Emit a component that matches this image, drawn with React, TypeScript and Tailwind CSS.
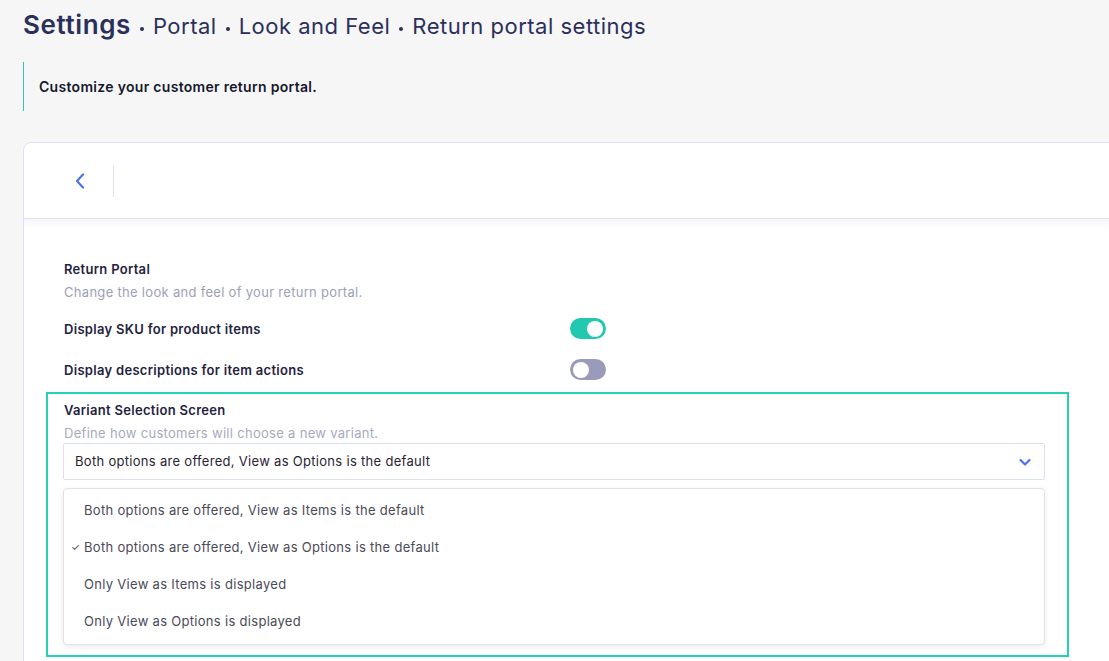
import React from 'react';

const Toggle: React.FC<{ on: boolean }> = ({ on }) => (
  <div
    className={`w-[36px] h-[21px] rounded-full flex items-center px-[3px] ${
      on ? 'bg-[#22c9b0] justify-end' : 'bg-[#9a9bbb] justify-start'
    }`}
  >
    <div className="w-[16px] h-[16px] rounded-full bg-white" />
  </div>
);

const Dot: React.FC = () => (
  <span className="inline-block w-[4px] h-[4px] rounded-full bg-[#2b2f5c] -translate-y-[3px]" />
);

const App: React.FC = () => {
  const options = [
    { label: 'Both options are offered, View as Items is the default', selected: false },
    { label: 'Both options are offered, View as Options is the default', selected: true },
    { label: 'Only View as Items is displayed', selected: false },
    { label: 'Only View as Options is displayed', selected: false }
  ];

  return (
    <div
      className="w-[1109px] h-[661px] overflow-hidden bg-[#f6f6f6] tracking-[0.3px]"
      style={{ fontFamily: 'Inter, "Open Sans", sans-serif' }}
    >
      <div className="pl-[23px] pt-[8px] flex items-baseline gap-[9px] text-[#2b2f5c]">
        <span className="text-[26px] leading-[34px] font-semibold tracking-[0.6px]">Settings</span>
        <Dot />
        <span className="text-[22px] leading-[34px] tracking-[0.5px]">Portal</span>
        <Dot />
        <span className="text-[22px] leading-[34px] tracking-[0.5px]">Look and Feel</span>
        <Dot />
        <span className="text-[22px] leading-[34px] tracking-[0.5px]">Return portal settings</span>
      </div>

      <div className="ml-[23px] mt-[19px] h-[49px] border-l border-[#3bbfbf] flex items-center pl-[15px]">
        <span className="text-[14px] font-semibold text-[#16182c]">
          Customize your customer return portal.
        </span>
      </div>

      <div className="ml-[23px] mt-[31px] w-[1120px] bg-white border border-[#dfe1f3] rounded-tl-[8px] h-[540px]">
        <div className="h-[76px] border-b border-[#dfe1f3] flex items-center pl-[46px]">
          <svg width="20" height="20" viewBox="0 0 20 20" fill="none">
            <path d="M13 3.5 L7 10 L13 16.5" stroke="#4f6ff4" strokeWidth="2.2" strokeLinecap="round" strokeLinejoin="round" />
          </svg>
          <div className="ml-[23px] w-px h-[32px] bg-[#dfe1f3]" />
        </div>
        <div className="h-[10px] bg-gradient-to-b from-[#f6f6fb] to-white" />

        <div className="pl-[40px] pt-[31px] w-[1046px]">
          <div className="text-[13px] leading-[18px] font-semibold text-[#1f2340]">Return Portal</div>
          <div className="mt-[5px] text-[13px] leading-[18px] text-[#9d9fb8]">
            Change the look and feel of your return portal.
          </div>

          <div className="mt-[17px] w-[542px] flex items-center justify-between">
            <span className="text-[13px] leading-[18px] font-semibold text-[#1f2340]">Display SKU for product items</span>
            <Toggle on />
          </div>
          <div className="mt-[20px] w-[542px] flex items-center justify-between">
            <span className="text-[13px] leading-[18px] font-semibold text-[#1f2340]">Display descriptions for item actions</span>
            <Toggle on={false} />
          </div>

          <div className="mt-[12px] -ml-[18px] w-[1023px] h-[265px] border-2 border-[#27cfb6] pl-[15px] pr-[22px] pt-[7px]">
            <div className="pl-[1px] text-[13px] leading-[18px] font-semibold text-[#1f2340]">Variant Selection Screen</div>
            <div className="pl-[1px] mt-[5px] text-[13px] leading-[18px] text-[#a7a9c0]">
              Define how customers will choose a new variant.
            </div>
            <div className="mt-[1px] h-[37px] border border-[#dde0f2] rounded-[2px] flex items-center justify-between pl-[11px] pr-[12px]">
              <span className="text-[13px] text-[#2a2333]">Both options are offered, View as Options is the default</span>
              <svg width="14" height="14" viewBox="0 0 14 14" fill="none">
                <path d="M2.5 5 L7 9.5 L11.5 5" stroke="#4f6ff4" strokeWidth="2.2" strokeLinecap="round" strokeLinejoin="round" />
              </svg>
            </div>
            <div className="mt-[8px] h-[157px] border border-[#e2e2e6] rounded-[4px] bg-white shadow-[0_2px_6px_rgba(0,0,0,0.08)] pt-[3px]">
              {options.map((o, i) => (
                <div key={i} className="h-[37px] flex items-center pl-[7px]">
                  <span className="w-[13px] text-[10px] text-[#3b3b4a]">{o.selected ? '✓' : ''}</span>
                  <span className="text-[13px] text-[#4a4a57]">{o.label}</span>
                </div>
              ))}
            </div>
          </div>
        </div>
      </div>
    </div>
  );
};

export default App;
